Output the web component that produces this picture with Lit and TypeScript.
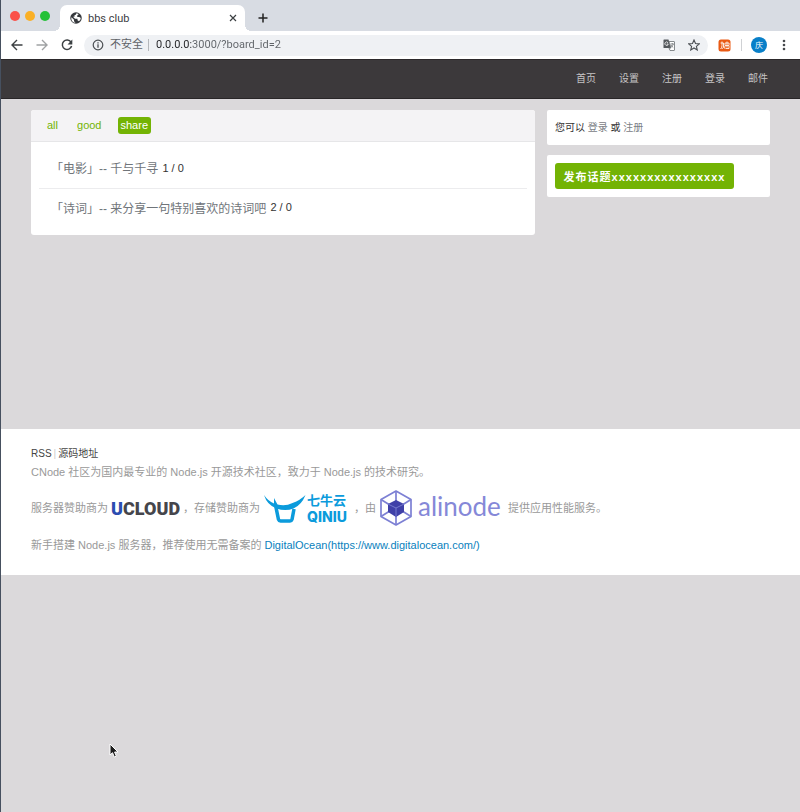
import { LitElement, html, css, svg } from "lit";
import { customElement, state } from "lit/decorators.js";
import { classMap } from "lit/directives/class-map.js";

@customElement("browser-chrome")
export class BrowserChrome extends LitElement {
  static styles = css`
    :host { display: block; font-family: Roboto, "Noto Sans CJK SC", sans-serif; color: #3c4043; }
    * { box-sizing: border-box; }
    button { border: 0; padding: 0; background: none; display: flex; align-items: center; justify-content: center; color: inherit; }
    svg { display: block; flex: none; }
    .tabs { display: flex; height: 31px; background: #d8dce3; padding-left: 9px; align-items: flex-end; }
    .lights { display: flex; gap: 5px; height: 31px; align-items: center; margin-right: 10px; }
    .light { width: 10px; height: 10px; border-radius: 50%; }
    .red { background: #fa5149; }
    .amber { background: #fab026; }
    .green { background: #24c138; }
    .tab { position: relative; display: flex; align-items: center; width: 185px; height: 26px; border-radius: 7px 7px 0 0; background: #fff; padding: 0 6px 0 10px; font-size: 11px; }
    .tab::before, .tab::after { content: ""; position: absolute; bottom: 0; width: 6px; height: 6px; }
    .tab::before { left: -6px; background: radial-gradient(circle at 0 0, transparent 6px, #fff 6px); }
    .tab::after { right: -6px; background: radial-gradient(circle at 100% 0, transparent 6px, #fff 6px); }
    .title { flex: 1; margin-left: 6px; }
    .close { width: 12px; height: 12px; }
    .add { width: 20px; height: 26px; margin-left: 8px; color: #222; }
    .bar { display: flex; align-items: center; height: 28px; background: #fff; padding: 0 9px 0 8px; }
    .nav { width: 16px; height: 20px; margin-right: 9px; }
    .dim { color: #a0a2a4; }
    .omni { flex: 1; display: flex; align-items: center; height: 21px; border-radius: 11px; background: #eff1f4; padding: 0 7px 0 8px; font-size: 11px; min-width: 0; }
    .unsafe { margin-left: 6px; padding-right: 5px; border-right: 1px solid #b5b8bc; line-height: 12px; white-space: nowrap; color: #5f6368; }
    .url { flex: 1; min-width: 0; border: 0; padding: 0; margin-left: 7px; outline: 0; font: 11px/20px Roboto, sans-serif; color: transparent; background: linear-gradient(90deg, #202124 35px, #5f6368 35px); -webkit-background-clip: text; background-clip: text; }
    .act { width: 14px; height: 14px; margin-left: 11px; }
    .ext { margin: 0 1px 0 10px; }
    .sep { width: 1px; height: 12px; background: #cfd1d4; margin: 0 9px; }
    .avatar { width: 16px; height: 16px; border-radius: 50%; background: #087fc8; color: #fff; font-size: 8px; }
    .more { width: 8px; height: 16px; margin-left: 13px; margin-right: 3px; }
  `;

  render() {
    return html`
      <div class="tabs">
        <div class="lights"><span class="light red"></span><span class="light amber"></span><span class="light green"></span></div>
        <div class="tab">
          <svg width="12" height="12" viewBox="0 0 24 24"><circle cx="12" cy="12" r="11.5" fill="#35383c"/><path d="M13 2.5q-1 4-4 4v3H6l4 4h5v3l3 2q3.500-2.500 3.500-6.500l-3-2h-4v-3l3-3zM3 10.500l5 5v3l3 3Q4 21 2.500 14z" fill="#fff"/></svg>
          <span class="title">bbs club</span>
          <button class="close" aria-label="Close tab"><svg width="8" height="8" viewBox="0 0 8 8"><path d="M1 1l6 6M7 1L1 7" stroke="#3c4043" stroke-width="1.2"/></svg></button>
        </div>
        <button class="add" aria-label="New tab"><svg width="10" height="10" viewBox="0 0 10 10"><path d="M5 .5v9M.5 5h9" stroke="currentColor" stroke-width="1.5"/></svg></button>
      </div>
      <div class="bar">
        <button class="nav" aria-label="Back"><svg width="12" height="12" viewBox="0 0 12 12"><path d="M11.500 6H1.200M6 1L1 6l5 5" fill="none" stroke="currentColor" stroke-width="1.4"/></svg></button>
        <button class="nav dim" aria-label="Forward"><svg width="12" height="12" viewBox="0 0 12 12"><path d="M.5 6h10.300M6 1l5 5-5 5" fill="none" stroke="currentColor" stroke-width="1.4"/></svg></button>
        <button class="nav" aria-label="Reload"><svg width="12" height="12" viewBox="0 0 12 12"><path d="M10 3.200A4.700 4.700 0 1 0 10.600 7" fill="none" stroke="currentColor" stroke-width="1.5"/><path d="M11.300.5v5H6.500z" fill="currentColor"/></svg></button>
        <div class="omni">
          <svg width="12" height="12" viewBox="0 0 12 12"><circle cx="6" cy="6" r="4.800" fill="none" stroke="#4b4f53" stroke-width="1.200"/><path d="M6 5.300v3.400M6 3.200v1.200" stroke="#4b4f53" stroke-width="1.300"/></svg>
          <span class="unsafe">不安全</span>
          <input class="url" aria-label="Address" .value=${"0.0.0.0:3000/?board_id=2"} />
          <button class="act" aria-label="Translate"><svg width="12" height="12" viewBox="0 0 24 24"><path d="M2 1h9l5 17H2q-1 0-1-1V2q0-1 1-1z" fill="#54585c"/><path d="M12 5h10q1 0 1 1v16q0 1-1 1h-8l-2-5h4z" fill="#fff" stroke="#6a6e72" stroke-width="1.600"/><path d="M10 7.500A3.400 3.400 0 1 0 10.500 10H7.500" fill="none" stroke="#fff" stroke-width="1.600"/><path d="M15 10h7M18.500 8v2M20.500 10q-1 4-4 6M16 12q2 3 4.500 5" fill="none" stroke="#6a6e72" stroke-width="1.500"/></svg></button>
          <button class="act" aria-label="Bookmark"><svg width="12" height="12" viewBox="0 0 24 24"><path d="M12 2l3 7 7.500.700-5.700 5 1.700 7.300L12 18l-6.500 4 1.700-7.300-5.700-5L9 9z" fill="none" stroke="#4b4f53" stroke-width="2.200"/></svg></button>
        </div>
        <button class="ext" aria-label="Extension"><svg width="13" height="13" viewBox="0 0 26 26"><rect x="1" y="1" width="24" height="24" rx="5" fill="#e95a14"/><path d="M5 8h6M8 5v8q0 5-3 7M11 8v9q-2 3-4 1M14 8h8v5h-8zM18 5v12M14 14l-1 5M22 14v5h-7" fill="none" stroke="#fff" stroke-width="1.700"/></svg></button>
        <span class="sep"></span>
        <button class="avatar" aria-label="Profile">庆</button>
        <button class="more" aria-label="Menu"><svg width="4" height="12" viewBox="0 0 4 12"><g fill="#46494d"><circle cx="2" cy="2" r="1.300"/><circle cx="2" cy="6" r="1.300"/><circle cx="2" cy="10" r="1.300"/></g></svg></button>
      </div>
    `;
  }
}

@customElement("site-footer")
export class SiteFooter extends LitElement {
  static styles = css`
    :host { display: block; background: #fff; padding: 16px 30px 21px; color: #999; font-size: 11px; line-height: 18px; }
    a { text-decoration: none; color: #0a7fbd; }
    p { margin: 0; }
    .links { font-size: 10px; color: #ccc; display: flex; gap: 2px; }
    .links a { color: #444; }
    .sponsors { display: flex; align-items: center; height: 54px; white-space: nowrap; }
    .host { margin-top: 1px; }
    .sponsors a { display: flex; margin: 0 3px; }
    svg { display: block; }
  `;

  render() {
    return html`
      <p class="links"><a href="#rss">RSS</a><span>|</span><a href="#source">源码地址</a></p>
      <p>CNode 社区为国内最专业的 Node.js 开源技术社区，致力于 Node.js 的技术研究。</p>
      <p class="sponsors">
        <span>服务器赞助商为</span>
        <a href="#ucloud"><svg width="69" height="22" viewBox="0 0 69 22" font-family="Roboto, sans-serif" font-weight="900" font-size="18"><text x="0" y="18" fill="#2b4db0">U</text><text x="12" y="18" fill="#45454b">CLOUD</text></svg></a>
        <span>，存储赞助商为</span>
        <a href="#qiniu"><svg width="88" height="34" viewBox="0 0 88 34" fill="#0b9bdc">
          <path d="M1 4q4 6 10 8.500V7q1 2 3.500 6.500 8 2 15-1.500 8-3 13-8-4 10-12 13.500-8 3-17 0Q4 14 1 4z"/>
          <path d="M12.500 14l3 14.500q.5 1.500 2 1.500h9.500q1.500 0 2-1.500l2-10.500" fill="none" stroke="#0b9bdc" stroke-width="3.500"/>
          <text x="44" y="14" font-family="Noto Sans CJK SC, sans-serif" font-weight="700" font-size="13">七牛云</text>
          <text x="44" y="31" font-family="Inter, sans-serif" font-weight="800" font-size="14">QINIU</text></svg></a>
        <span>，由</span>
        <a href="#alinode"><svg width="126" height="38" viewBox="0 0 126 38">
          <g fill="none" stroke="#7d80d4" stroke-width="1.700" stroke-linejoin="round"><path d="M17 2l15 8.500v17L17 36 2 27.500v-17z"/><path d="M17 2v10M2 10.500l8 5M32 10.500l-8 5M2 27.500l8-5M32 27.500l-8-5M17 36V26"/></g>
          <path d="M17 11l8 4v8l-8 5-8-5v-8z" fill="#3f40a8"/><path d="M9 15l8 4 8-4M17 19v9" fill="none" stroke="#7478ce"/>
          <text x="39" y="27" font-family="Lato, sans-serif" font-size="26" fill="#8588d8">alinode</text></svg></a>
        <span>提供应用性能服务。</span>
      </p>
      <p class="host">新手搭建 Node.js 服务器，推荐使用无需备案的 <a href="https://www.digitalocean.com/">DigitalOcean(https://www.digitalocean.com/)</a></p>
    `;
  }
}

@customElement("app-root")
export class AppRoot extends LitElement {
  static styles = css`
    :host { display: block; min-height: 100vh; position: relative; background: #dbd9db; border-left: 1px solid #46505f; box-sizing: border-box; font-family: "Liberation Sans", "Noto Sans CJK SC", sans-serif; color: #333; font-size: 10px; }
    * { box-sizing: border-box; }
    a { text-decoration: none; }
    .top { display: flex; justify-content: flex-end; align-items: center; gap: 23px; height: 40px; padding: 0 32px; background: #3c393b; border-top: 1px solid #2c292b; border-bottom: 1px solid #292628; }
    .top a { color: #c6c4c5; line-height: 16px; }
    .page { display: flex; gap: 12px; align-items: flex-start; padding: 11px 30px 0; min-height: 330px; }
    .main { flex: 1; min-width: 0; background: #fff; border-radius: 3px; overflow: hidden; }
    .boards { display: flex; align-items: center; gap: 13px; height: 32px; padding: 0 13px; background: #f4f3f5; border-bottom: 1px solid #e6e6e8; font-size: 11px; }
    .boards a { color: #73b304; padding: 0 3px; line-height: 17px; border-radius: 3px; }
    .boards a.on { background: #73b304; color: #fff; }
    .topics { list-style: none; margin: 0; padding: 7px 8px 8px; }
    .topics li { height: 39px; display: flex; align-items: center; gap: 4px; padding: 0 0 2px 12px; font-size: 11px; }
    .topics li + li { border-top: 1px solid #ececee; }
    .topics a { color: #70757a; font-size: 12px; }
    .side { width: 223px; display: flex; flex-direction: column; gap: 10px; }
    .card { background: #fff; border-radius: 2px; padding: 8px; }
    .hint { line-height: 19px; }
    .hint a { color: #7b8085; }
    .post { display: block; width: 179px; height: 26px; border: 0; border-radius: 3px; background: #73b304; color: #fff; font: 700 11px "Liberation Sans", "Noto Sans CJK SC", sans-serif; letter-spacing: 1px; padding: 0; white-space: nowrap; }
    .pointer { position: absolute; left: 108px; top: 743px; }
  `;

  @state() private board = "share";

  private topics = [
    { tag: "电影", title: "千与千寻", count: "1 / 0" },
    { tag: "诗词", title: "来分享一句特别喜欢的诗词吧", count: "2 / 0" },
  ];

  render() {
    return html`
      <browser-chrome></browser-chrome>
      <nav class="top">${["首页", "设置", "注册", "登录", "邮件"].map((t) => html`<a href="#">${t}</a>`)}</nav>
      <div class="page">
        <main class="main">
          <nav class="boards">
            ${["all", "good", "share"].map((b) => html`<a href="#${b}" class=${classMap({ on: b === this.board })} @click=${() => (this.board = b)}>${b}</a>`)}
          </nav>
          <ul class="topics">
            ${this.topics.map((t) => html`<li><a href="#topic">「${t.tag}」-- ${t.title}</a><span>${t.count}</span></li>`)}
          </ul>
        </main>
        <aside class="side">
          <div class="card hint">您可以 <a href="#login">登录</a> 或 <a href="#signup">注册</a></div>
          <div class="card"><button class="post">发布话题xxxxxxxxxxxxxxxx</button></div>
        </aside>
      </div>
      <site-footer></site-footer>
      <svg class="pointer" width="11" height="15" viewBox="0 0 11 15">${svg`<path d="M1 1v11l2.500-2.300L5.300 14l2-.900L5.600 9H9z" fill="#1c1c1c" stroke="#fff" stroke-width="1"/>`}</svg>
    `;
  }
}
